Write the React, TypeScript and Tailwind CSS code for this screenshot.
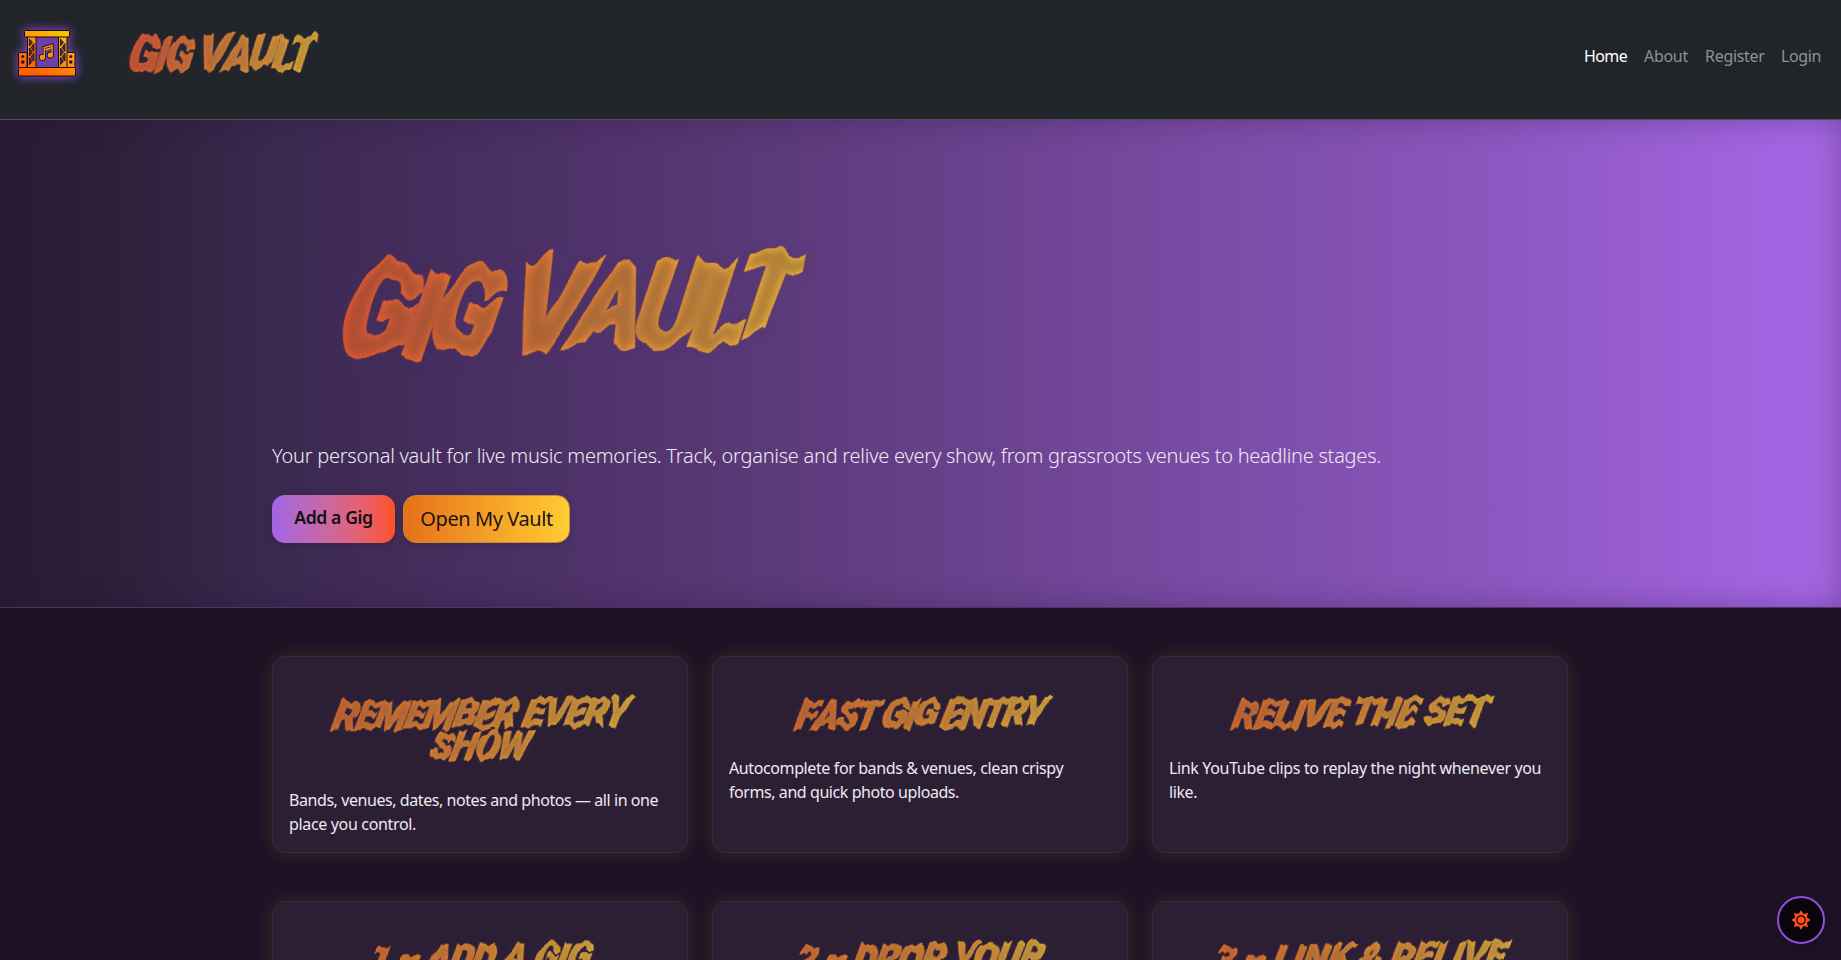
import React from 'react';

const display =
  "inline-block whitespace-nowrap bg-clip-text text-transparent italic font-black uppercase font-['Roboto',sans-serif] bg-linear-to-r";

const brand = 'from-[#f5562a] via-[#f28a30] to-[#f8c234]';

const cardTitle =
  'from-[#ee742a] via-[#f3962e] to-[#f6c038] px-2 -skew-x-12 -skew-y-1 [-webkit-text-stroke:1.3px_transparent] [text-shadow:0_0_4px_rgba(80,60,45,0.3),0_0_12px_rgba(70,50,130,0.2)] [filter:url(#jag-sm)]';

function Caps({ text, big }: { text: string; big: string }) {
  return (
    <>
      {text.split(' ').map((word, i) => (
        <React.Fragment key={i}>
          {i > 0 && ' '}
          <span className={big}>{word[0]}</span>
          {word.slice(1)}
        </React.Fragment>
      ))}
    </>
  );
}

/* Displacement filters that give the display lettering its jagged edges. */
function JagFilters() {
  return (
    <svg width="0" height="0" className="absolute">
      <filter id="jag-lg" x="-5%" y="-20%" width="110%" height="140%" colorInterpolationFilters="sRGB">
        <feTurbulence type="fractalNoise" baseFrequency="0.036 0.007" numOctaves="2" seed="4" />
        <feColorMatrix values="0 0 0 0 0.5  0 1 0 0 0  0 0 0 0 0  0 0 0 0 1" result="n" />
        <feDisplacementMap in="SourceGraphic" in2="n" scale="36" xChannelSelector="R" yChannelSelector="G" />
      </filter>
      <filter id="jag-sm" x="-5%" y="-20%" width="110%" height="140%" colorInterpolationFilters="sRGB">
        <feTurbulence type="fractalNoise" baseFrequency="0.11 0.018" numOctaves="2" seed="4" />
        <feColorMatrix values="0 0 0 0 0.5  0 1 0 0 0  0 0 0 0 0  0 0 0 0 1" result="n" />
        <feDisplacementMap in="SourceGraphic" in2="n" scale="12" xChannelSelector="R" yChannelSelector="G" />
      </filter>
    </svg>
  );
}

function StageLogo() {
  return (
    <svg
      width="64"
      height="54"
      viewBox="0 0 64 54"
      className="ml-[15px] mt-[26px] shrink-0 [filter:drop-shadow(0_0_5px_rgba(150,80,230,0.75))_drop-shadow(0_0_5px_rgba(150,80,230,0.3))]"
    >
      <defs>
        <linearGradient id="stage" gradientUnits="userSpaceOnUse" x1="14" y1="50" x2="42" y2="4">
          <stop offset="0.15" stopColor="#ff6200" />
          <stop offset="0.6" stopColor="#ff9310" />
          <stop offset="1" stopColor="#f8c400" />
        </linearGradient>
      </defs>
      <rect x="20" y="11" width="24" height="30" fill="#6b3fa0" fillOpacity="0.85" />
      <g fill="url(#stage)" stroke="#120a14" strokeWidth="1">
        <rect x="3.5" y="26.5" width="8.5" height="15" rx="1" />
        <rect x="51.5" y="26.5" width="8.5" height="15" rx="1" />
        <rect x="12.5" y="10.5" width="8.5" height="31" />
        <rect x="43.5" y="10.5" width="8.5" height="31" />
        <rect x="9.5" y="4.5" width="45" height="6.5" rx="1" />
        <rect x="3.5" y="41.5" width="57" height="8.5" rx="1" />
      </g>
      <g fill="#4b2c6c" stroke="#120a14" strokeWidth="0.8">
        <path d="M14.5 13v7l3-3.5z M19 17.5v8l-3-4z M14.5 22v8l3-4z M19 27v8l-3-4z M14.5 31.5v7l3-3.5z" />
        <path d="M45.5 13v7l3-3.5z M50 17.5v8l-3-4z M45.5 22v8l3-4z M50 27v8l-3-4z M45.5 31.5v7l3-3.5z" />
      </g>
      <g fill="#2a1030">
        <circle cx="7.8" cy="30.5" r="1.5" />
        <circle cx="7.8" cy="36" r="1.8" />
        <circle cx="55.8" cy="30.5" r="1.5" />
        <circle cx="55.8" cy="36" r="1.8" />
      </g>
      <g stroke="#120a14" strokeWidth="3" fill="none">
        <path d="M29.3 31.3V21.5L37 19.3V29" />
        <circle cx="27.3" cy="31.3" r="1.9" />
        <circle cx="35.3" cy="29" r="1.9" />
      </g>
      <g stroke="#ff9a12" strokeWidth="1.4" fill="#ff8a10">
        <path d="M29.3 31.3V21.5L37 19.3V29M29.3 23.8L37 21.6" fill="none" />
        <circle cx="27.3" cy="31.3" r="1.9" />
        <circle cx="35.3" cy="29" r="1.9" />
      </g>
    </svg>
  );
}

function Card({ title, lines }: { title: React.ReactNode; lines?: React.ReactNode }) {
  return (
    <article className="flex h-[197px] flex-col rounded-[14px] border border-[#3a2a49] bg-[#2c1f34] px-4 pt-[41px] shadow-[0_0_18px_rgba(255,170,40,0.15)]">
      <h3 className="flex min-h-[33px] flex-col items-center text-[37px] leading-8">{title}</h3>
      <p className="mt-[25px] flex flex-col text-base leading-6 text-[#eee9f2]">{lines}</p>
    </article>
  );
}

export default function App() {
  return (
    <div className="flex h-[960px] flex-col overflow-hidden bg-[#1e1226] font-['Noto_Sans',sans-serif]">
      <JagFilters />
      <header className="flex h-[120px] shrink-0 border-b border-[#55505c] bg-[#212529]">
        <StageLogo />
        <div className="ml-[46px] mt-6 flex h-16 w-[210px] items-center">
          <span
            className={`${display} ${brand} origin-left scale-y-110 -skew-x-10 -skew-y-1 px-1 text-[42px] leading-[60px] tracking-[-2.9px] [-webkit-text-stroke:1.3px_transparent] [text-shadow:0_0_4px_rgba(80,60,45,0.3),0_0_12px_rgba(90,70,160,0.2)] [filter:url(#jag-sm)]`}
          >
            <Caps text="Gig Vault" big="text-[46px]" />
          </span>
        </div>
        <nav className="ml-auto mr-5 mt-11 flex gap-4 text-base leading-6 text-[#8f9193]">
          <a className="w-11 tracking-[-0.6px] text-white">Home</a>
          <a className="w-[45px] tracking-[-0.3px]">About</a>
          <a className="w-[60px] tracking-[-0.3px]">Register</a>
          <a className="w-10 tracking-[-0.4px]">Login</a>
        </nav>
      </header>

      <section className="flex h-[488px] shrink-0 flex-col border-b border-[#4b3566] bg-[linear-gradient(90deg,#2a1b33_0%,#2e1f39_6%,#3b2950_15%,#4a3064_28%,#573874_39%,#6b428f_54%,#7b4ca6_66%,#8b55bd_80%,#a264e0_96%,#a466e2_100%)] pl-[272px] shadow-[inset_0_0_30px_rgba(40,15,60,0.32)]">
        <h1 className="mt-[132px] flex h-[130px] items-center pl-[62px]">
          <span
            className={`${display} ${brand} origin-left scale-y-110 -skew-x-12 -skew-y-2 px-2 text-[104px] leading-[140px] tracking-[-8px] [-webkit-text-stroke:4px_transparent] [text-shadow:0_0_9px_rgba(90,60,50,0.4),0_0_26px_rgba(100,60,170,0.16)] [filter:url(#jag-lg)]`}
          >
            <Caps text="Gig Vault" big="text-[114px]" />
          </span>
        </h1>
        <p className="mt-[59px] whitespace-nowrap text-xl leading-[30px] font-light tracking-[-0.258px] text-[#eee8f4]">
          Your personal vault for live music memories. Track, organise and relive every show, from grassroots venues to
          headline stages.
        </p>
        <div className="mt-6 flex gap-2">
          <button className="flex h-12 w-[123px] items-center justify-center rounded-[13px] bg-linear-to-r from-[#a264e6] to-[#ff501f] pb-1 text-[17.6px] font-semibold tracking-[-0.4px] text-[#121014] shadow-[0_2px_8px_rgba(0,0,0,0.15)]">
            Add a Gig
          </button>
          <button className="flex h-12 w-[167px] items-center justify-center rounded-[13px] border border-[#c98a35] bg-linear-to-r from-[#e6701a] to-[#ffcc33] pb-px text-xl tracking-[-0.42px] text-[#1c1510] shadow-[0_2px_8px_rgba(0,0,0,0.15)]">
            Open My Vault
          </button>
        </div>
      </section>

      <main className="ml-[272px] mt-12 grid w-[1296px] grid-cols-3 gap-x-6 gap-y-12">
        <Card
          title={
            <>
              <span className={`${display} ${cardTitle} tracking-[-1.6px]`}>
                <Caps text="Remember Every" big="text-[40px]" />
              </span>
              <span className={`${display} ${cardTitle} from-[#f08c2e]! to-[#f3a832]! tracking-[-1.6px]`}>Show</span>
            </>
          }
          lines={
            <>
              <span className="tracking-[-0.43px]">Bands, venues, dates, notes and photos — all in one</span>
              <span className="tracking-[-0.34px]">place you control.</span>
            </>
          }
        />
        <Card
          title={
            <span className={`${display} ${cardTitle} tracking-[-2.7px]`}>
              <Caps text="Fast Gig Entry" big="text-[40px]" />
            </span>
          }
          lines={
            <>
              <span className="tracking-[-0.39px]">Autocomplete for bands &amp; venues, clean crispy</span>
              <span className="tracking-[-0.43px]">forms, and quick photo uploads.</span>
            </>
          }
        />
        <Card
          title={<span className={`${display} ${cardTitle} tracking-[-1.1px]`}>Relive the Set</span>}
          lines={
            <>
              <span className="tracking-[-0.35px]">Link YouTube clips to replay the night whenever you</span>
              <span className="tracking-[-0.4px]">like.</span>
            </>
          }
        />
        <Card title={<span className={`${display} ${cardTitle} tracking-[-1.1px]`}>1 – Add a Gig</span>} />
        <Card title={<span className={`${display} ${cardTitle} tracking-[-1.1px]`}>2 – Drop your</span>} />
        <Card title={<span className={`${display} ${cardTitle} tracking-[-0.6px]`}>3 – Link &amp; Relive</span>} />
      </main>

      <button
        aria-label="Toggle theme"
        className="fixed right-4 bottom-4 flex size-12 items-center justify-center rounded-full border-2 border-[#9150dc] bg-[#08050c] shadow-[0_4px_12px_rgba(0,0,0,0.2)]"
      >
        <svg width="20" height="20" viewBox="0 0 20 20">
          <path
            fill="#ff4f1c"
            d="M10 .3 12.5 4 16.9 3.100 16 7.5 19.7 10 16 12.5 16.9 16.9 12.5 16 10 19.7 7.5 16 3.100 16.9 4 12.5.3 10 4 7.5 3.100 3.100 7.5 4z"
          />
          <circle cx="10" cy="10" r="4.2" fill="#ff4f1c" stroke="#08050c" strokeWidth="1.2" />
        </svg>
      </button>
    </div>
  );
}
